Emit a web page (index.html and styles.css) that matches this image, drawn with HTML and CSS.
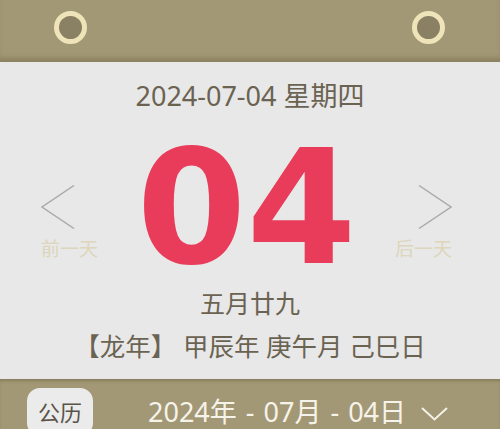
FILE: index.html
```html
<!DOCTYPE html>
<html lang="zh-CN">
<head>
<meta charset="utf-8">
<title>日历</title>
<link rel="stylesheet" href="styles.css">
</head>
<body>
<div class="page">
  <div class="top">
    <span class="ring"></span>
    <span class="ring"></span>
  </div>
  <div class="main">
    <div class="date">2024-07-04 星期四</div>
    <div class="row">
      <div class="nav nav-prev">
        <svg class="arrow" width="34" height="44" viewBox="0 0 34 44"><polyline points="33,0.5 1,22 33,43.5" fill="none" stroke="#a9a9a6" stroke-width="1.4"/></svg>
        <span class="nav-text">前一天</span>
      </div>
      <div class="day">04</div>
      <div class="nav nav-next">
        <svg class="arrow" width="34" height="44" viewBox="0 0 34 44"><polyline points="1,0.5 33,22 1,43.5" fill="none" stroke="#a9a9a6" stroke-width="1.4"/></svg>
        <span class="nav-text">后一天</span>
      </div>
    </div>
    <div class="lunar">五月廿九</div>
    <div class="ganzhi">【龙年】 甲辰年 庚午月 己巳日</div>
  </div>
  <div class="bottom">
    <span class="pill">公历</span>
    <span class="picker">2024年 - 07月 - 04日</span>
    <svg class="chev" width="27" height="14" viewBox="0 0 27 14"><polyline points="1,1 13.5,12.5 26,1" fill="none" stroke="#f4f1e8" stroke-width="2"/></svg>
  </div>
</div>
</body>
</html>
```

FILE: styles.css
```css
html, body {
  margin: 0;
  padding: 0;
}
body {
  width: 500px;
  height: 429px;
  overflow: hidden;
  font-family: "Noto Sans", "Open Sans", "Noto Sans CJK SC", sans-serif;
  background: #e8e8e8;
}
.page {
  display: flex;
  flex-direction: column;
  height: 429px;
}
.top {
  height: 62px;
  box-sizing: border-box;
  background: #a39875;
  box-shadow: inset 0 -6px 5px -2px rgba(110, 100, 70, 0.45);
  display: flex;
  justify-content: space-between;
  align-items: flex-start;
  padding: 11px 55px 0 54px;
}
.ring {
  width: 33px;
  height: 33px;
  box-sizing: border-box;
  border-radius: 50%;
  border: 5px solid #efe3ba;
  background: #8a8063;
}
.main {
  height: 317px;
  background: #e8e8e8;
  display: flex;
  flex-direction: column;
  align-items: center;
  color: #6b6352;
}
.date {
  margin-top: 18px;
  font-size: 27px;
  line-height: 32px;
}
.row {
  margin-top: 27px;
  align-self: stretch;
  height: 138px;
  display: flex;
  justify-content: space-between;
  padding: 0 48px 0 41px;
}
.nav {
  display: flex;
  flex-direction: column;
  padding-top: 46px;
  gap: 8px;
}
.nav-prev { align-items: flex-start; }
.nav-next { align-items: flex-end; }
.arrow { display: block; }
.nav-text {
  font-size: 19px;
  line-height: 24px;
  color: #ddd6bb;
}
.day {
  font-family: "DejaVu Sans", "Noto Sans", sans-serif;
  font-weight: 700;
  font-size: 158px;
  line-height: 138px;
  height: 138px;
  color: #e83c5a;
}
.lunar {
  margin-top: 11px;
  font-size: 25px;
  line-height: 30px;
}
.ganzhi {
  margin-top: 13px;
  font-size: 25.5px;
  line-height: 30px;
}
.bottom {
  flex: 1;
  background: #a39875;
  box-shadow: inset 0 3px 3px -1px rgba(110, 100, 70, 0.5);
  display: flex;
  align-items: flex-start;
  padding: 9px 0 0 27px;
  overflow: hidden;
}
.pill {
  width: 66px;
  height: 48px;
  box-sizing: border-box;
  border-radius: 13px;
  background: #ebebeb;
  color: #5a5448;
  font-size: 22px;
  line-height: 48px;
  text-align: center;
  flex: none;
}
.picker {
  margin-left: 55px;
  margin-top: 9px;
  font-size: 27px;
  line-height: 30px;
  color: #f6f3ea;
  white-space: pre;
  word-spacing: 2px;
}
.chev {
  margin-left: 15px;
  margin-top: 19px;
}
```
